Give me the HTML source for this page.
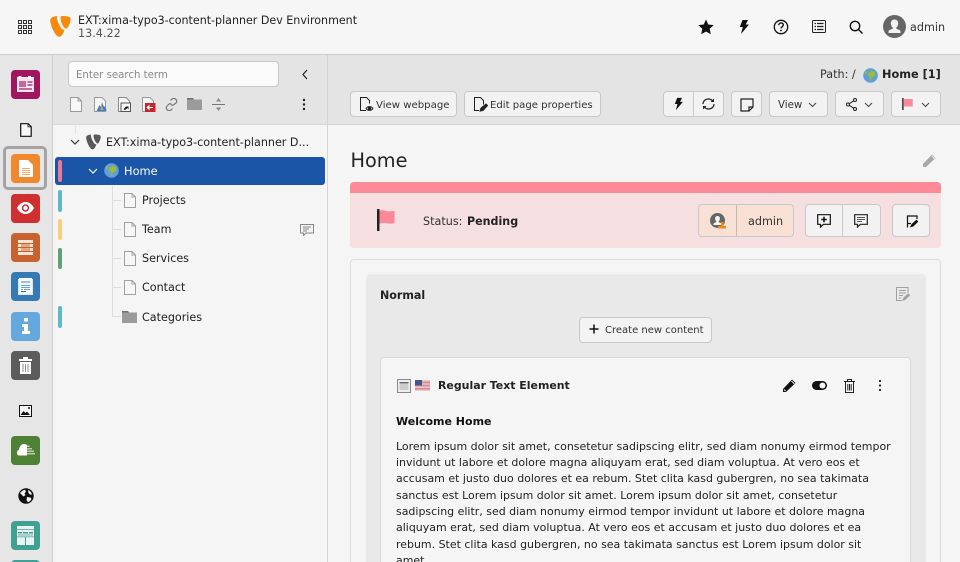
<!DOCTYPE html>
<html><head><meta charset="utf-8">
<style>
html,body{margin:0;padding:0;width:960px;height:562px;overflow:hidden}
body{position:relative;background:#f5f5f5;font-family:"DejaVu Sans","Liberation Sans",sans-serif;font-size:12px;color:#1a1a1a}
.a,.t,.b,svg.i{position:absolute}
.t{white-space:nowrap;line-height:16px}
.b{box-sizing:border-box;border:1px solid #c8c8c8;border-radius:4px;background:#f2f2f2}
.m{border-radius:4px;left:11px;width:29px;height:29px;position:absolute}
.bar{position:absolute;left:58px;width:4px;border-radius:2px}
</style></head><body>
<!-- regions -->
<div class="a" style="left:0;top:0;width:960px;height:54px;background:#f6f6f6;border-bottom:1px solid #ccc"></div>
<div class="a" style="left:0;top:55px;width:52px;height:507px;background:#e6e6e6;border-right:1px solid #ccc"></div>
<div class="a" style="left:53px;top:55px;width:274px;height:69px;background:#e4e4e4;border-bottom:1px solid #d8d8d8"></div>
<div class="a" style="left:327px;top:55px;width:1px;height:507px;background:#d4d4d4"></div>
<div class="a" style="left:328px;top:55px;width:632px;height:69px;background:#e4e4e4;border-bottom:1px solid #d4d4d4"></div>

<!-- header -->
<svg class="i" style="left:18px;top:20px" width="14" height="14" viewBox="0 0 14 14" fill="none" stroke="#333" stroke-width="1"><rect x=".5" y=".5" width="3" height="3"/><rect x="5.500" y=".5" width="3" height="3"/><rect x="10.500" y=".5" width="3" height="3"/><rect x=".5" y="5.500" width="3" height="3"/><rect x="5.500" y="5.500" width="3" height="3"/><rect x="10.500" y="5.500" width="3" height="3"/><rect x=".5" y="10.500" width="3" height="3"/><rect x="5.500" y="10.500" width="3" height="3"/><rect x="10.500" y="10.500" width="3" height="3"/></svg>
<svg class="i" style="left:50px;top:16px" width="21" height="21" viewBox="0 0 21 21"><path fill="#f58a0b" d="M14.500 13.600c-.3.1-.6.1-.9.1-2.700 0-6.700-9.400-6.700-12.500 0-1.200.3-1.500.7-1.200C3.600.3 .2 1.500.2 4.400c0 4 4.700 16.400 9 16.400 2.100 0 4-2.800 5.300-7.200zM12.600 0c3.900 0 8 .6 8 2.800 0 4.500-2.900 9.900-4.300 9.900-2.600 0-5.800-7.100-5.800-10.700C10.500.400 11.100 0 12.600 0z"/></svg>
<div class="t" style="left:78px;top:13px;font-size:11.090px;color:#222">EXT:xima-typo3-content-planner Dev Environment</div>
<div class="t" style="left:78px;top:26px;font-size:11.200px;color:#555">13.4.22</div>

<svg class="i" style="left:698px;top:19px" width="16" height="16" viewBox="0 0 16 16"><path fill="#111" d="M8 .5l2.300 5 5.400.6-4 3.700 1.100 5.400L8 12.500l-4.800 2.700 1.100-5.400-4-3.700 5.400-.6z"/></svg>
<svg class="i" style="left:738px;top:19px" width="12" height="16" viewBox="0 0 12 16"><path fill="#111" d="M4.500 1H10L7.700 5.500H11L3 15l1.800-7H1.800z"/></svg>
<svg class="i" style="left:773px;top:19px" width="16" height="16" viewBox="0 0 16 16"><circle cx="8" cy="8" r="6.700" fill="none" stroke="#111" stroke-width="1.300"/><path d="M5.800 6.200c0-3 4.500-3 4.500-.2 0 1.800-2.300 1.700-2.300 3.400" fill="none" stroke="#111" stroke-width="1.400"/><circle cx="8" cy="11.500" r=".9" fill="#111"/></svg>
<svg class="i" style="left:812px;top:20px" width="14" height="13" viewBox="0 0 14 13" fill="none" stroke="#222"><rect x=".5" y=".5" width="13" height="12" rx="1"/><path d="M2.500 3.500h1.500M5 3.500h6.500M2.500 6.500h1.500M5 6.500h6.500M2.500 9.500h1.500M5 9.500h6.500" stroke-width="1.300"/></svg>
<svg class="i" style="left:849px;top:20px" width="14" height="14" viewBox="0 0 14 14" fill="none" stroke="#111" stroke-width="1.400"><circle cx="6" cy="6" r="4.700"/><path d="M9.500 9.500l4 4"/></svg>
<svg class="i" style="left:883px;top:15px" width="23" height="23" viewBox="0 0 23 23"><circle cx="11.500" cy="11.500" r="11.500" fill="#666"/><path fill="#f2f2f2" d="M11.500 4.500c-2.300 0-3.700 1.700-3.700 4 0 1.600.7 3.200 1.900 4v1.300c-1.600.6-4.200 1.300-4.200 2.500V18h12v-1.700c0-1.200-2.600-1.900-4.200-2.500v-1.300c1.200-.8 1.900-2.400 1.900-4 0-2.300-1.400-4-3.700-4z"/></svg>
<div class="t" style="left:910px;top:19.500px;font-size:11.200px;color:#333">admin</div>

<!-- rail -->
<div class="m" style="top:70px;background:#a0175f"></div>
<svg class="i" style="left:17px;top:76px" width="17" height="17" viewBox="0 0 17 17"><rect x="0" y="1" width="17" height="15" fill="#f4e6ee"/><rect x="1.500" y="0" width="3" height="3" fill="#fff"/><rect x="11" y="0" width="3" height="3" fill="#fff"/><rect x="2" y="5" width="7" height="6" fill="#c46a9a"/><rect x="10.500" y="5" width="5" height="2" fill="#c46a9a"/><rect x="10.500" y="8" width="5" height="2" fill="#c46a9a"/><rect x="2" y="12" width="13" height="2" fill="#c46a9a"/></svg>
<svg class="i" style="left:20px;top:123px" width="12" height="14" viewBox="0 0 12 14" fill="none" stroke="#111" stroke-width="1.200"><path d="M.7.700h7.500l3 3v9.600H.7z" fill="#f8f8f8"/><path d="M8 .7v3.200h3.200" stroke-width=".8"/></svg>

<div class="a" style="left:3px;top:146px;width:38px;height:38px;border:3px solid #a3a3a3;border-radius:5px"></div>
<div class="m" style="top:154px;background:#f0882d"></div>
<svg class="i" style="left:19px;top:160px" width="14" height="17" viewBox="0 0 14 17"><path d="M0 0h9l5 5v12H0z" fill="#fff"/><path d="M3 8h8v1H3zM3 10h8v1H3zM3 12h8v1H3zM3 14h8v1H3z" fill="#f0a76a"/></svg>

<div class="m" style="top:194px;background:#d02f2f"></div>
<svg class="i" style="left:17px;top:202px" width="17" height="12" viewBox="0 0 17 12"><path fill="#fff" d="M8.500 0C4.700 0 1.700 2.500 0 6c1.700 3.500 4.700 6 8.500 6s6.800-2.500 8.500-6C15.300 2.500 12.300 0 8.500 0z"/><circle cx="8.500" cy="6" r="3.700" fill="#d02f2f"/><circle cx="8.500" cy="6" r="2.200" fill="#fff"/></svg>

<div class="m" style="top:233px;background:#c8622e"></div>
<svg class="i" style="left:18px;top:240px" width="15" height="15" viewBox="0 0 15 15"><path fill="#f7e5d8" d="M0 0h15v3H0zM0 4h15v3H0zM0 8h15v3H0zM0 12h15v3H0z"/><path fill="#e2a684" d="M3 4h9v3H3zM3 8h9v3H3z"/></svg>

<div class="m" style="top:272px;background:#357ab5"></div>
<svg class="i" style="left:18px;top:278px" width="15" height="17" viewBox="0 0 15 17"><rect x="0" y="1" width="15" height="16" fill="#dbe8f3"/><rect x="1" y="0" width="13" height="16" fill="#f7fafc"/><path d="M3 3h9v2H3z" fill="#9dc0de"/><path d="M3 7h9v1H3zM3 9h9v1H3zM3 11h2v1H3zM6 11h6v1H6z" fill="#6ea1cc"/><path d="M3 13h5v1H3z" fill="#2f6ea6"/></svg>

<div class="m" style="top:312px;background:#65a8de"></div>
<svg class="i" style="left:21px;top:318px" width="10" height="16" viewBox="0 0 10 16"><path fill="#fff" d="M3 0h4v3.500H3zM1 6h6v7h2v3H1v-3h2V9H1z"/></svg>

<div class="m" style="top:351px;background:#5c5c5c"></div>
<svg class="i" style="left:19px;top:357px" width="13" height="17" viewBox="0 0 13 17"><path fill="#fff" d="M0 2h4V0h5v2h4v2H0zM1 5h11v12H1z"/><path fill="#8f8f8f" d="M3.500 7h1v8h-1zM6 7h1v8H6zM8.500 7h1v8h-1z"/></svg>

<svg class="i" style="left:19px;top:405px" width="13" height="12" viewBox="0 0 13 12"><rect x=".5" y=".5" width="12" height="11" fill="#f7f7f7" stroke="#111"/><path d="M1.500 10l3-4 2 2 1.500-1.500 3 3.500z" fill="#111"/><circle cx="10" cy="3" r="1" fill="#111"/></svg>

<div class="m" style="top:436px;background:#4e8036"></div>
<svg class="i" style="left:17px;top:444px" width="18" height="12" viewBox="0 0 18 12"><path fill="#fff" d="M2 11.500C.7 11.500 0 10.300 0 8.800 0 7.200 .8 6.200 2 5.800 2.500 2.300 4.500 0 7 0c1.300 0 2.300.4 3 1v10.500z"/><path fill="#bcd0ae" d="M10 1.500h2.500V3H10zM10 4h5v1.500h-5zM10 6.500h7V8h-7zM10 9h8v1.500h-8z"/></svg>

<svg class="i" style="left:18px;top:488px" width="16" height="16" viewBox="0 0 16 16"><circle cx="8" cy="8" r="7.700" fill="#111"/><path fill="#f2f2f2" d="M2 5c1.200-1.800 3-3 5-3.300L8 3.500 6.500 5.500 7.500 7 5.500 8.500 3.500 6.500zM10 2c2 .8 3.500 2.300 4 4.500h-2l-1.500-1.500zM9 9l3.500.5 1 1.500c-.8 1.500-2 2.700-3.500 3.300L8.500 12z"/></svg>

<div class="m" style="top:521px;background:#3fa094"></div>
<svg class="i" style="left:17px;top:526px" width="17" height="19" viewBox="0 0 17 19"><rect width="17" height="19" fill="#e9f4f2"/><path fill="#3fa094" d="M0 3h17v.8H0zM1 6h4v1.500H1zM6 6h5v1.500H6zM12 6h4v1.500h-4zM0 10.500h17v.8H0zM8 11h1v8H8z"/><path fill="#a9d3cd" d="M1 8h15v2H1z"/></svg>
<div class="a" style="left:11px;top:560px;width:29px;height:4px;border-radius:4px 4px 0 0;background:#3fa094"></div>

<!-- tree toolbar -->
<div class="a" style="left:68px;top:61px;box-sizing:border-box;width:211px;height:26px;background:#fafafa;border:1px solid #c8c8c8;border-radius:4px"></div>
<div class="t" style="left:76px;top:68px;font-size:10.200px;color:#8a8a8a">Enter search term</div>
<svg class="i" style="left:300px;top:69px" width="10" height="11" viewBox="0 0 10 11"><path d="M7 1L3 5.500 7 10" fill="none" stroke="#222" stroke-width="1.200"/></svg>
<svg class="i" style="left:70px;top:97px" width="12" height="15" viewBox="0 0 12 15" fill="none" stroke="#9a9a9a"><path d="M.5.500h7.500l3.500 3.500v10.500H.5z" fill="#f7f7f7"/><path d="M8 .5V4h3.500"/></svg>
<svg class="i" style="left:94px;top:97px" width="14" height="15" viewBox="0 0 14 15"><path d="M.5.500h7.500l3.500 3.500v10.500H.5z" fill="#f7f7f7" stroke="#9a9a9a"/><path d="M2.500 14l3-6 1.500 2 1-5 1.500 4 2 1 1 4z" fill="#3f7fc4"/><path d="M6.500 13l1-5 2 5z" fill="#e9a13a"/></svg>
<svg class="i" style="left:118px;top:97px" width="13" height="15" viewBox="0 0 13 15"><path d="M.5.500h7.500l3.500 3.500v10.500H.5z" fill="#f7f7f7" stroke="#8a8a8a"/><rect x="3" y="6" width="9.500" height="8.500" fill="#f7f7f7" stroke="#555"/><path d="M5.500 12.500L8 9.500H6.500h4v3l-1-1.500-2.500 2z" fill="#111"/></svg>
<svg class="i" style="left:142px;top:97px" width="14" height="15" viewBox="0 0 14 15"><path d="M.5.500h7.500l3.500 3.500v10.500H.5z" fill="#f7f7f7" stroke="#9a9a9a"/><rect x="3" y="6" width="10.500" height="9" fill="#c8242c"/><path d="M5 10.500h6M5 10.500l2-1.800v3.600z" stroke="#fff" fill="#fff"/></svg>
<svg class="i" style="left:165px;top:98px" width="13" height="13" viewBox="0 0 13 13" fill="none" stroke="#777" stroke-width="1.200"><path d="M5.500 2.500l1.500-1.500c1-1 2.600-1 3.800.2s1.200 2.800.2 3.800L9 6.500c-1 1-2 1-3 .2"/><path d="M7.500 10.500L6 12c-1 1-2.600 1-3.800-.2S1 9 2 8l1.500-1.500c1-1 2-1 3-.2"/></svg>
<svg class="i" style="left:187px;top:98px" width="15" height="12" viewBox="0 0 15 12"><path d="M0 0h6l1 1.500h8V12H0z" fill="#9b9b9b"/><path d="M0 0h6l1 1.500H0z" fill="#707070"/></svg>
<svg class="i" style="left:212px;top:98px" width="13" height="13" viewBox="0 0 13 13"><path d="M0 6h13v1H0z" fill="#777"/><path d="M6.500 0l2.500 3.500H4zM6.500 13L9 9.500H4z" fill="#888"/></svg>
<svg class="i" style="left:302px;top:98px" width="4" height="13" viewBox="0 0 4 13"><circle cx="2" cy="2" r="1.200" fill="#222"/><circle cx="2" cy="6.500" r="1.200" fill="#222"/><circle cx="2" cy="11" r="1.200" fill="#222"/></svg>

<!-- tree -->
<div class="a" style="left:75px;top:126px;width:1px;height:8px;background:#e0e0e0"></div>
<div class="a" style="left:112px;top:186px;width:1px;height:131px;background:#ddd"></div>
<div class="a" style="left:112px;top:200px;width:9px;height:1px;background:#ddd"></div>
<div class="a" style="left:112px;top:229px;width:9px;height:1px;background:#ddd"></div>
<div class="a" style="left:112px;top:258px;width:9px;height:1px;background:#ddd"></div>
<div class="a" style="left:112px;top:287px;width:9px;height:1px;background:#ddd"></div>
<div class="a" style="left:112px;top:316px;width:9px;height:1px;background:#ddd"></div>

<svg class="i" style="left:70px;top:139px" width="10" height="6" viewBox="0 0 10 6"><path d="M1 1l4 4 4-4" fill="none" stroke="#333" stroke-width="1.200"/></svg>
<svg class="i" style="left:86px;top:134px" width="15" height="16" viewBox="0 0 21 21"><path fill="#585858" d="M14.500 13.600c-.3.1-.6.1-.9.1-2.700 0-6.700-9.400-6.700-12.500 0-1.200.3-1.500.7-1.200C3.600.3 .2 1.500.2 4.400c0 4 4.700 16.400 9 16.400 2.100 0 4-2.800 5.300-7.200zM12.600 0c3.900 0 8 .6 8 2.800 0 4.500-2.900 9.900-4.300 9.900-2.600 0-5.800-7.100-5.800-10.700C10.500.400 11.100 0 12.600 0z"/></svg>
<div class="t" style="left:106px;top:135px;font-size:11.150px;color:#222">EXT:xima-typo3-content-planner D...</div>

<div class="a" style="left:55px;top:157px;width:270px;height:28px;background:#1a55a8;border-radius:3px"></div>
<div class="bar" style="top:160px;height:22px;background:#ec7a93"></div>
<svg class="i" style="left:88px;top:168px" width="10" height="6" viewBox="0 0 10 6"><path d="M1 1l4 4 4-4" fill="none" stroke="#fff" stroke-width="1.200"/></svg>
<svg class="i" style="left:104px;top:163px" width="15" height="15" viewBox="0 0 15 15"><circle cx="7.500" cy="7.500" r="7.300" fill="#5f9fd8"/><path fill="#9cbb3c" d="M8 3c2-.5 4 .5 4.500 2.500l-1 3-2.500 1-1 3.500-1-1-.5-3.500L4.500 7 6 4.500zM1.500 5l2-2.500 1 1.500-1.500 2.500z"/></svg>
<div class="t" style="left:124px;top:163px;font-size:11.400px;color:#fff">Home</div>

<div class="bar" style="top:190px;height:22px;background:#5fb8cc"></div>
<div class="bar" style="top:219px;height:21px;background:#fbcf77"></div>
<div class="bar" style="top:248px;height:21px;background:#62a078"></div>
<div class="bar" style="top:306px;height:22px;background:#5fb8cc"></div>

<svg class="i" style="left:124px;top:193px" width="12" height="15" viewBox="0 0 12 15" fill="none" stroke="#a0a0a0"><path d="M.5.500h7.500l3.500 3.500v10.500H.5z" fill="#f7f7f7"/><path d="M8 .5V4h3.500"/></svg>
<div class="t" style="left:142px;top:193px;font-size:11.150px;color:#222">Projects</div>
<svg class="i" style="left:124px;top:222px" width="12" height="15" viewBox="0 0 12 15" fill="none" stroke="#a0a0a0"><path d="M.5.500h7.500l3.500 3.500v10.500H.5z" fill="#f7f7f7"/><path d="M8 .5V4h3.500"/></svg>
<div class="t" style="left:142px;top:222px;font-size:11.150px;color:#222">Team</div>
<svg class="i" style="left:300px;top:224px" width="14" height="12" viewBox="0 0 14 12"><path d="M.5.500h13v8.500H6L3.500 11.500V9H.5z" fill="#f2f2f2" stroke="#888"/><path d="M3 3h8M3 5h6M3 7h4" stroke="#888"/></svg>
<svg class="i" style="left:124px;top:251px" width="12" height="15" viewBox="0 0 12 15" fill="none" stroke="#a0a0a0"><path d="M.5.500h7.500l3.500 3.500v10.500H.5z" fill="#f7f7f7"/><path d="M8 .5V4h3.500"/></svg>
<div class="t" style="left:142px;top:251px;font-size:11.150px;color:#222">Services</div>
<svg class="i" style="left:124px;top:280px" width="12" height="15" viewBox="0 0 12 15" fill="none" stroke="#a0a0a0"><path d="M.5.500h7.500l3.500 3.500v10.500H.5z" fill="#f7f7f7"/><path d="M8 .5V4h3.500"/></svg>
<div class="t" style="left:142px;top:280px;font-size:11.150px;color:#222">Contact</div>
<svg class="i" style="left:122px;top:311px" width="15" height="12" viewBox="0 0 15 12"><path d="M0 0h6l1 1.500h8V12H0z" fill="#9b9b9b"/><path d="M0 0h6l1 1.500H0z" fill="#707070"/></svg>
<div class="t" style="left:142px;top:310px;font-size:11.150px;color:#222">Categories</div>

<!-- path -->
<div class="t" style="left:820px;top:67px;font-size:11.200px;color:#333">Path: /</div>
<svg class="i" style="left:863px;top:68px" width="15" height="15" viewBox="0 0 15 15"><circle cx="7.500" cy="7.500" r="7.300" fill="#5f9fd8"/><path fill="#9cbb3c" d="M8 3c2-.5 4 .5 4.500 2.500l-1 3-2.500 1-1 3.500-1-1-.5-3.500L4.500 7 6 4.500zM1.500 5l2-2.500 1 1.500-1.500 2.500z"/></svg>
<div class="t" style="left:882px;top:67px;font-size:11.300px;font-weight:bold;color:#222">Home [1]</div>

<!-- docheader buttons -->
<div class="b" style="left:350px;top:91px;width:107px;height:26px"></div>
<svg class="i" style="left:360px;top:97px" width="14" height="15" viewBox="0 0 14 15" fill="none" stroke="#222"><path d="M6 13.500H.5V.5h6l3 3v3"/><path d="M6 11.500c1.500-2.500 5.500-2.500 7 0-1.500 2.500-5.500 2.500-7 0z"/><circle cx="9.500" cy="11.500" r="1.300" fill="#222"/></svg>
<div class="t" style="left:376px;top:98px;font-size:10.150px;color:#333">View webpage</div>
<div class="b" style="left:464px;top:91px;width:137px;height:26px"></div>
<svg class="i" style="left:474px;top:97px" width="14" height="15" viewBox="0 0 14 15" fill="none" stroke="#222"><path d="M5 13.500H.5V.5h6l3 3v4"/><path d="M6 14l1-3 5-4 1.500 1.500-4.500 5z" fill="#222"/></svg>
<div class="t" style="left:490px;top:98px;font-size:10.100px;color:#333">Edit page properties</div>

<div class="b" style="left:663px;top:91px;width:61px;height:26px"></div>
<div class="a" style="left:693px;top:92px;width:1px;height:24px;background:#c8c8c8"></div>
<svg class="i" style="left:673px;top:97px" width="11" height="14" viewBox="0 0 12 16"><path fill="#111" d="M4.500 1H10L7.700 5.500H11L3 15l1.800-7H1.800z"/></svg>
<svg class="i" style="left:701px;top:97px" width="15" height="14" viewBox="0 0 15 14" fill="none" stroke="#222" stroke-width="1.200"><path d="M2 7c0-3 2.500-5 5.500-5 1.800 0 3.200.8 4.200 2"/><path d="M13 7c0 3-2.500 5-5.500 5-1.800 0-3.200-.8-4.200-2"/><path d="M13 1.500V5H9.500z" fill="#222" stroke="none"/><path d="M2 12.500V9h3.500z" fill="#222" stroke="none"/></svg>
<div class="b" style="left:731px;top:91px;width:31px;height:26px"></div>
<svg class="i" style="left:740px;top:98px" width="14" height="14" viewBox="0 0 14 14"><path d="M1 1h12v8l-4 4H1z" fill="none" stroke="#222" stroke-width="1.200"/><path d="M13 9H9v4" fill="none" stroke="#222" stroke-width="1.200"/></svg>
<div class="b" style="left:769px;top:91px;width:59px;height:26px"></div>
<div class="t" style="left:778px;top:98px;font-size:10.200px;color:#333">View</div>
<svg class="i" style="left:808px;top:102px" width="9" height="6" viewBox="0 0 9 6"><path d="M1 1l3.500 3.500L8 1" fill="none" stroke="#444"/></svg>
<div class="b" style="left:835px;top:91px;width:49px;height:26px"></div>
<svg class="i" style="left:846px;top:98px" width="11" height="13" viewBox="0 0 11 13" fill="none" stroke="#222"><circle cx="2" cy="6.500" r="1.500"/><circle cx="9" cy="2" r="1.500"/><circle cx="9" cy="11" r="1.500"/><path d="M3.300 5.700L7.700 2.800M3.300 7.300l4.400 2.900"/></svg>
<svg class="i" style="left:864px;top:102px" width="9" height="6" viewBox="0 0 9 6"><path d="M1 1l3.500 3.500L8 1" fill="none" stroke="#444"/></svg>
<div class="b" style="left:891px;top:91px;width:50px;height:26px"></div>
<svg class="i" style="left:902px;top:98px" width="11" height="12" viewBox="0 0 11 12"><rect x="0" y="0" width="1.700" height="12" fill="#444"/><path d="M1.700 1h9v7.500h-9z" fill="#fb8896"/></svg>
<svg class="i" style="left:921px;top:102px" width="9" height="6" viewBox="0 0 9 6"><path d="M1 1l3.500 3.500L8 1" fill="none" stroke="#444"/></svg>

<!-- title -->
<div class="t" style="left:350.500px;top:149px;font-size:19.300px;line-height:24px;color:#222">Home</div>
<svg class="i" style="left:922px;top:153px" width="15" height="15" viewBox="0 0 15 15"><path d="M1 11l9-9.500 3.500 3.500L4 14H1z" fill="#a8a8a8"/><path d="M10 3l2.500 2.500" stroke="#f5f5f5"/></svg>

<!-- status banner -->
<div class="a" style="left:350px;top:182px;width:591px;height:66px;background:#f6dfe0;border-radius:4px;overflow:hidden"><div style="height:11px;background:#fd8a97"></div></div>
<svg class="i" style="left:377px;top:209px" width="20" height="22" viewBox="0 0 20 22"><rect x="0" y="0" width="2.500" height="22" fill="#222"/><path d="M2.500 2c2.500-1.500 5-.2 8 .2 2.500.4 5-.2 7-.2v12c-3 .8-5 .8-8 .2-2.500-.5-5 .2-7 .3z" fill="#fb8896"/></svg>
<div class="t" style="left:423px;top:213.500px;font-size:11.200px;color:#333">Status:</div>
<div class="t" style="left:467px;top:213.500px;font-size:11.100px;font-weight:bold;color:#222">Pending</div>

<div class="b" style="left:698px;top:204px;width:96px;height:33px;background:#f9e0d4"></div>
<div class="a" style="left:736px;top:205px;width:1px;height:31px;background:#c9b8b0"></div>
<svg class="i" style="left:710px;top:213px" width="16" height="16" viewBox="0 0 16 16"><circle cx="7.500" cy="7.500" r="7.500" fill="#666"/><path fill="#f5f5f5" d="M7.500 3c-1.500 0-2.400 1.100-2.400 2.600 0 1 .5 2 1.200 2.600v1c-1 .4-2.800.8-2.800 1.700V12h8v-1.100c0-.9-1.800-1.300-2.800-1.700v-1c.7-.6 1.200-1.600 1.200-2.600C9.900 4.100 9 3 7.500 3z"/><path fill="#f08a1c" d="M8 13h8v2.500H8zM11 9h2.500v4H11z"/></svg>
<div class="t" style="left:748px;top:213.500px;font-size:11.200px;color:#333">admin</div>

<div class="b" style="left:805px;top:204px;width:76px;height:33px"></div>
<div class="a" style="left:842px;top:205px;width:1px;height:31px;background:#c8c8c8"></div>
<svg class="i" style="left:817px;top:214px" width="14" height="14" viewBox="0 0 14 14"><path d="M.7.700h12.600v9.600H6.500L3.500 13v-2.700H.7z" fill="#f7f7f7" stroke="#111" stroke-width="1.200"/><path d="M7 2.800v5.500M4.300 5.500h5.500" stroke="#111" stroke-width="1.600"/></svg>
<svg class="i" style="left:854px;top:214px" width="14" height="14" viewBox="0 0 14 14"><path d="M.7.700h12.600v9.600H6.500L3.500 13v-2.700H.7z" fill="#f7f7f7" stroke="#222" stroke-width="1.200"/><path d="M3 3.500h8M3 5.500h8M3 7.500h5" stroke="#555"/></svg>
<div class="b" style="left:892px;top:204px;width:38px;height:33px"></div>
<svg class="i" style="left:905px;top:215px" width="13" height="13" viewBox="0 0 13 13" fill="none" stroke="#111" stroke-width="1.200"><path d="M2.500 12.500V1H12v3"/><path d="M2.500 8.500H6"/><path d="M6 11.500l1-2 4.500-4 1 1-4.500 4.500z" fill="#111"/></svg>

<!-- panel -->
<div class="a" style="left:350px;top:259px;width:591px;height:320px;box-sizing:border-box;border:1px solid #dcdcdc;border-radius:4px"></div>
<div class="a" style="left:366px;top:274px;width:560px;height:300px;background:#e9e9e9;border-radius:4px"></div>
<div class="t" style="left:380px;top:288px;font-size:11.100px;font-weight:bold;color:#222">Normal</div>
<svg class="i" style="left:896px;top:287px" width="14" height="14" viewBox="0 0 14 14" fill="none" stroke="#a0a0a0"><path d="M12 6V.5H.5v13H6"/><path d="M3 3.500h7M3 6h7M3 8.500h4M3 11h2"/><path d="M7 13l.7-2 4.500-4 1.300 1.300L9 12.500z" fill="#a0a0a0"/></svg>
<div class="b" style="left:579px;top:317px;width:133px;height:26px;background:#f3f3f3"></div>
<svg class="i" style="left:589px;top:324px" width="10" height="10" viewBox="0 0 10 10"><path d="M5 .5v9M.5 5h9" stroke="#111" stroke-width="1.500"/></svg>
<div class="t" style="left:605px;top:323px;font-size:10px;color:#333">Create new content</div>

<div class="a" style="left:380px;top:357px;width:531px;height:220px;box-sizing:border-box;background:#f5f5f5;border:1px solid #d9d9d9;border-radius:4px"></div>
<svg class="i" style="left:397px;top:379px" width="14" height="14" viewBox="0 0 14 14"><rect x=".5" y=".5" width="13" height="13" fill="#eee" stroke="#8a8a8a"/><path d="M2.500 3h9v1.500h-9z" fill="#666"/><path d="M2.500 6h9M2.500 8h9M2.500 10h9" stroke="#aaa"/></svg>
<svg class="i" style="left:415px;top:380px" width="15" height="11" viewBox="0 0 15 11"><rect width="15" height="11" fill="#e8c9c9"/><path d="M0 1.600h15v1.600H0zM0 4.800h15v1.600H0zM0 8h15v1.500H0z" fill="#d8888f"/><rect width="7" height="5.500" fill="#44588c"/></svg>
<div class="t" style="left:438px;top:378px;font-size:10.950px;font-weight:bold;color:#222">Regular Text Element</div>

<svg class="i" style="left:782px;top:378px" width="15" height="15" viewBox="0 0 15 15"><path d="M1 11l9-9.500 3.500 3.500L4 14H1z" fill="#111"/><path d="M9.500 3l2.800 2.800" stroke="#f5f5f5"/><path d="M2 11.500l1.500 1.500" stroke="#f5f5f5"/></svg>
<svg class="i" style="left:812px;top:381px" width="15" height="9" viewBox="0 0 15 9"><rect width="15" height="9" rx="4.500" fill="#111"/><circle cx="10.500" cy="4.500" r="3" fill="#f5f5f5"/></svg>
<svg class="i" style="left:844px;top:379px" width="11" height="14" viewBox="0 0 11 14" fill="none" stroke="#222"><path d="M0 2.500h11M3.500 2.500V.5h4v2M1.500 2.500v11h8v-11M3.800 5v6.500M5.500 5v6.500M7.200 5v6.500"/></svg>
<svg class="i" style="left:878px;top:379px" width="4" height="13" viewBox="0 0 4 13"><circle cx="2" cy="2" r="1.100" fill="#222"/><circle cx="2" cy="6.500" r="1.100" fill="#222"/><circle cx="2" cy="11" r="1.100" fill="#222"/></svg>

<div class="t" style="left:396px;top:414px;font-size:11px;font-weight:bold;color:#111">Welcome Home</div>
<div class="a" style="left:396px;top:438.500px;width:505px;font-size:10.980px;line-height:16.350px;color:#222;white-space:nowrap">Lorem ipsum dolor sit amet, consetetur sadipscing elitr, sed diam nonumy eirmod tempor<br>invidunt ut labore et dolore magna aliquyam erat, sed diam voluptua. At vero eos et<br>accusam et justo duo dolores et ea rebum. Stet clita kasd gubergren, no sea takimata<br>sanctus est Lorem ipsum dolor sit amet. Lorem ipsum dolor sit amet, consetetur<br>sadipscing elitr, sed diam nonumy eirmod tempor invidunt ut labore et dolore magna<br>aliquyam erat, sed diam voluptua. At vero eos et accusam et justo duo dolores et ea<br>rebum. Stet clita kasd gubergren, no sea takimata sanctus est Lorem ipsum dolor sit<br>amet.</div>
</body></html>
